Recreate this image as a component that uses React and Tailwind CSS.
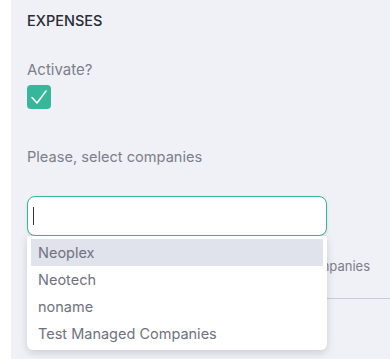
import React from 'react';

const companies = ['Neoplex', 'Neotech', 'noname', 'Test Managed Companies'];

function App() {
  return (
    <div className="flex h-[359px] w-[390px] overflow-hidden bg-white" style={{ fontFamily: 'Inter, "Noto Sans", sans-serif' }}>
      <div className="w-[11px] shrink-0 bg-white" />
      <div className="flex-1 bg-[#f0f1f6] pl-4">
        <h2 className="mt-[12px] text-[14.5px] font-medium leading-[18px] text-[#2b2c36]">EXPENSES</h2>

        <div className="mt-[30px] text-[15px] leading-[20px] text-[#7b7e8b]">Activate?</div>
        <div className="mt-[5px] flex h-6 w-6 items-center justify-center rounded-[4px] bg-[#36b79b]">
          <svg width="20" height="20" viewBox="0 0 20 20" fill="none">
            <path d="M3 10.5 L8 16 L17 4" stroke="white" strokeWidth="1.6" strokeLinecap="round" strokeLinejoin="round" />
          </svg>
        </div>

        <div className="mt-[38px] text-[14.6px] leading-[20px] text-[#7b7e8b]">Please, select companies</div>

        <div className="relative mt-[29px] w-[300px]">
          <div className="flex h-[40px] items-center rounded-[8px] border border-[#36b79b] bg-white px-[5px] shadow-sm">
            <span className="h-[18px] w-px bg-[#333]" />
          </div>

          <div className="absolute left-0 right-0 top-[40px] z-10 rounded-b-[6px] bg-white px-1 pt-[3px] pb-[3px] shadow-[0_3px_8px_rgba(0,0,0,0.15)]">
            {companies.map((c, i) => (
              <div key={c} className={`h-[27px] px-[7px] text-[14.5px] leading-[27px] text-[#6f727e] ${i === 0 ? 'bg-[#e0e2ec]' : ''}`}>
                {c}
              </div>
            ))}
          </div>

          <div className="absolute left-[296px] top-[62px] whitespace-nowrap text-[13px] leading-[16px] text-[#7b7e8b]">
            <span className="-ml-[100px] inline-block w-[147px] text-right">Select all companies</span>
          </div>
        </div>

        <div className="ml-[300px] mt-[62px] h-px bg-[#c9cbd8]" />
      </div>
    </div>
  );
}

export default App;
